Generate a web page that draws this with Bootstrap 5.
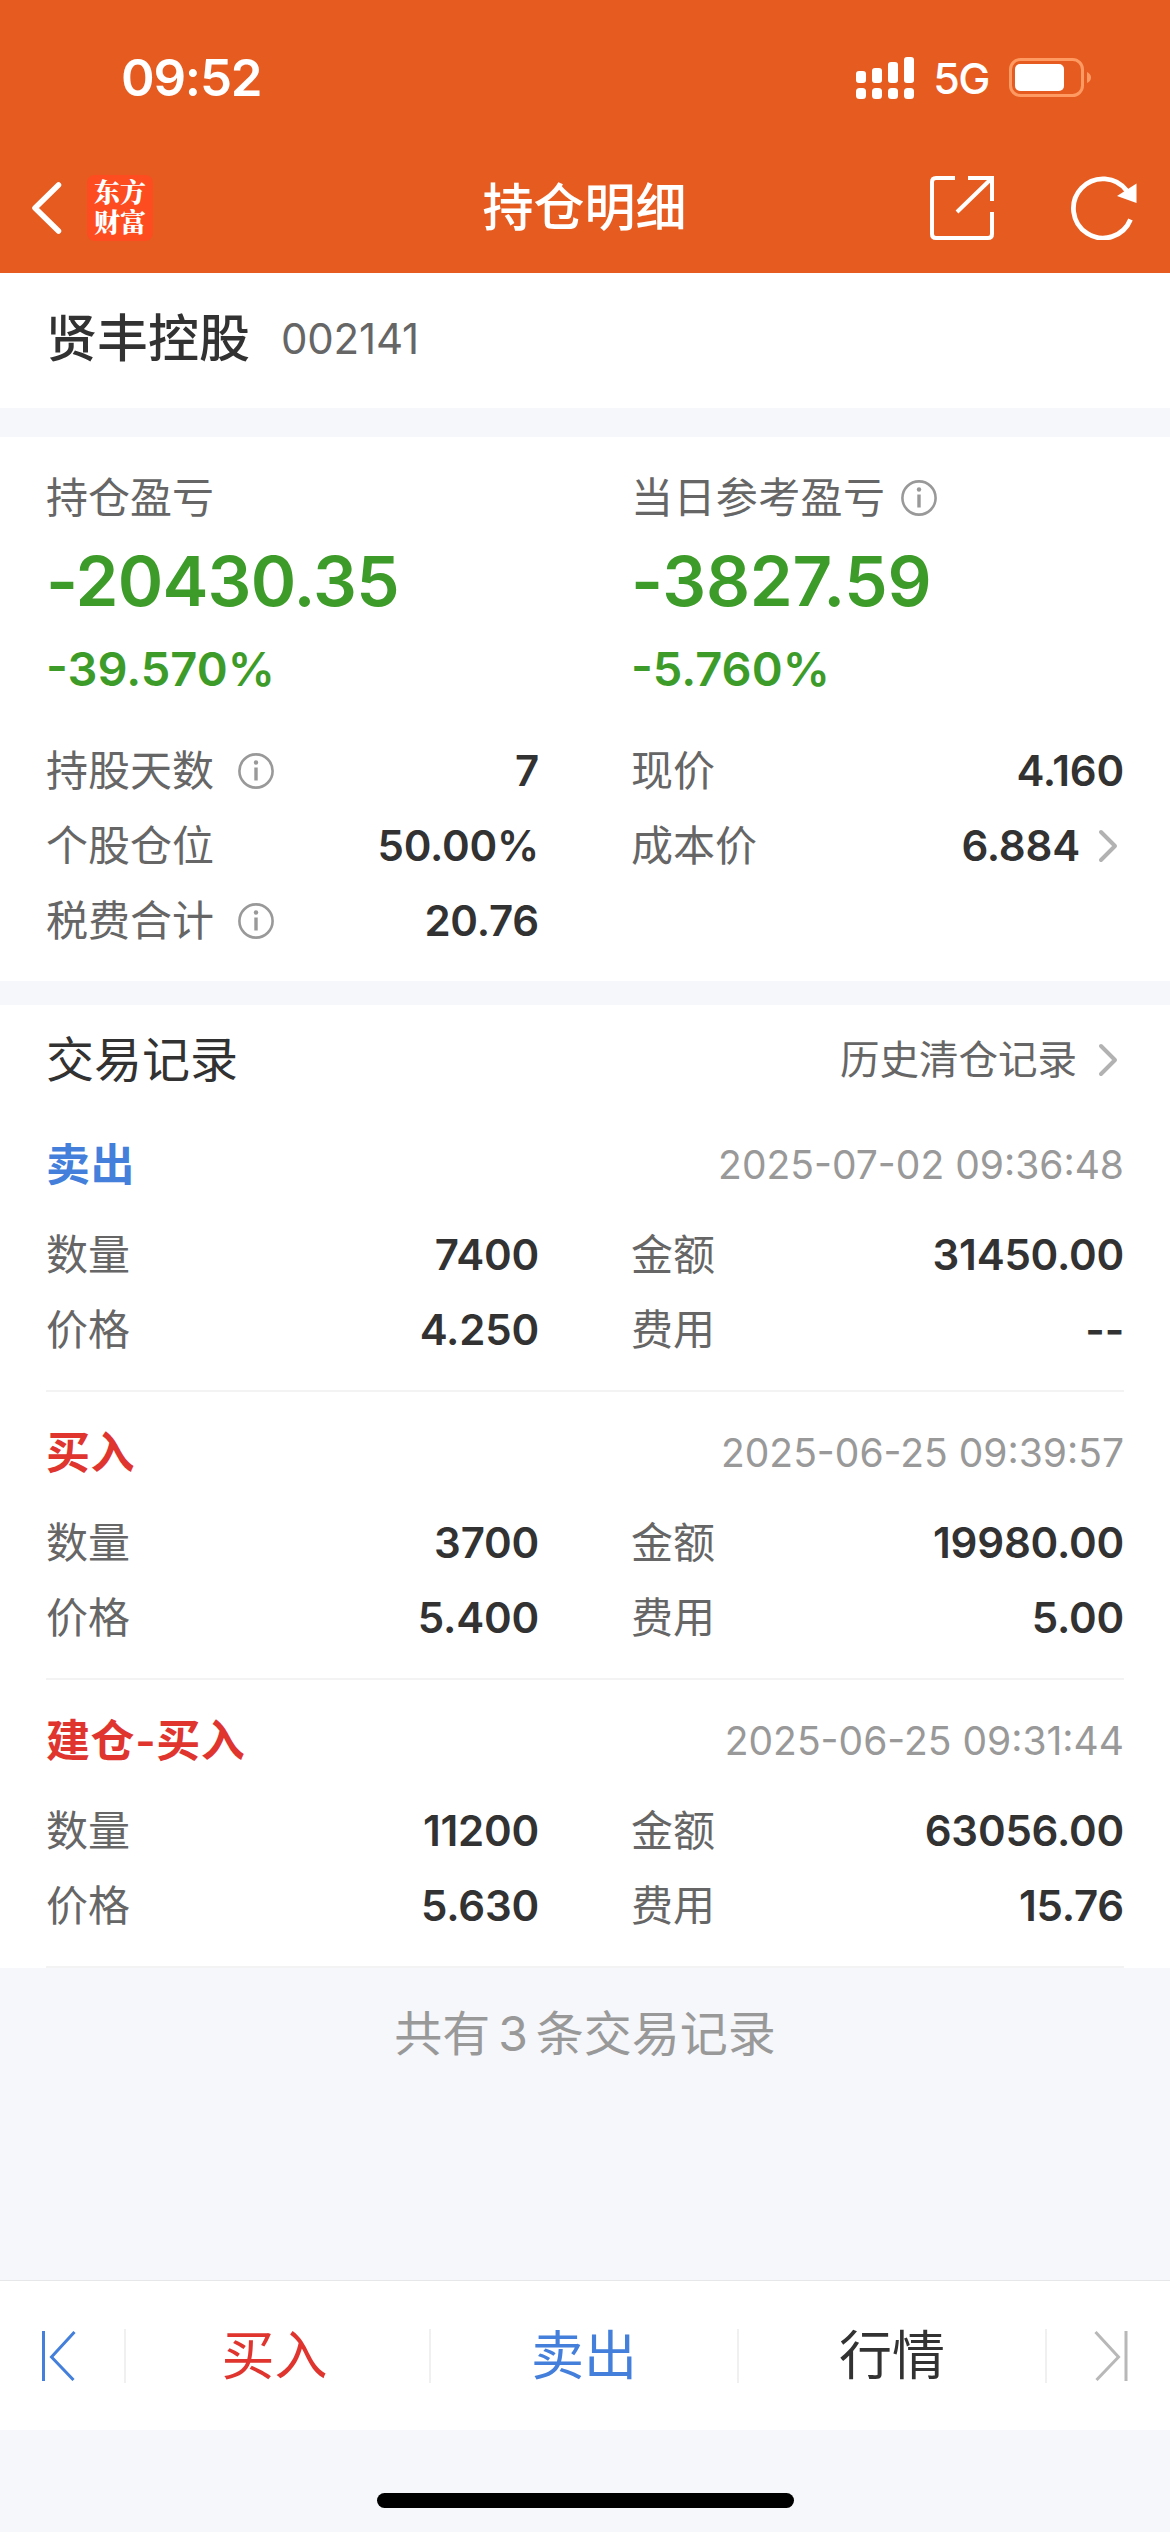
<!DOCTYPE html>
<html lang="zh-CN">
<head>
<meta charset="utf-8">
<meta name="viewport" content="width=device-width, initial-scale=1">
<title>持仓明细</title>
<link href="https://cdn.jsdelivr.net/npm/bootstrap@5.3.0/dist/css/bootstrap.min.css" rel="stylesheet">
<style>
body{font-family:Inter,"Noto Sans CJK SC",sans-serif;background:#f6f7fa;color:#323232;width:1170px;height:2532px;overflow:hidden}
svg{display:block;flex:none}
.topbar{background:#e65b1f;height:273px;color:#fff}
.status{height:145px;padding:10px 79px 0 121px}
.clock{font-size:51px;font-weight:600;line-height:60px;letter-spacing:-1.2px}
.net{font-size:43px;line-height:50px;font-weight:500;letter-spacing:-1.5px;margin:0 20px 0 19px}
.titlebar{height:128px;display:grid;grid-template-columns:1fr auto 1fr;padding:0 33px 2px 32px}
.titlebar h1{font-size:51px;font-weight:500;margin:0;line-height:60px}
.brand{width:66px;height:66px;border-radius:8px;background:#fd4c20;font-family:"Noto Serif CJK SC","Noto Sans CJK SC",sans-serif;font-size:26px;line-height:30px;font-weight:900;margin-left:25px;padding-bottom:5px}
.tools{gap:77px}
.stock{height:135px;padding:0 46px 3px;gap:31px}
.stock-name{font-size:51px;font-weight:500;line-height:60px}
.stock-code{font-size:42px;color:#666;line-height:50px;letter-spacing:-.2px}
.holding{margin-top:29px;height:544px;padding:31px 46px 0}
.records{margin-top:24px;height:963px;padding:19px 46px 0}
.pair{display:grid;grid-template-columns:493px 493px;column-gap:92px}
.lab{font-size:42px;line-height:60px;color:#666}
.lab-wide{letter-spacing:.4px}
.num{font-size:42px;font-weight:600;line-height:60px;letter-spacing:-.2px}
.kv{height:75px}
.down{color:#3d9c29;font-weight:600}
.amount{font-size:69px;line-height:90px;margin-top:8px;letter-spacing:-.8px}
.amount-day{letter-spacing:-.3px}
.rate{font-size:47px;line-height:60px;margin-top:13px;margin-bottom:34px}
.sec-title{font-size:48px;line-height:72px}
.hist{font-size:39.500px;color:#666;line-height:60px}
.hist svg{margin-left:19px}
.entry{height:288px;border-bottom:2px solid #f3f3f3}
.entry-first{margin-top:8px}
.entry-head{height:121px;padding-top:31px}
.side{font-size:44px;font-weight:600;line-height:60px;letter-spacing:.6px}
.buy{color:#e0352f}.sell{color:#437fdb}
.stamp{font-size:39px;color:#999;line-height:60px}
.total{font-size:48px;color:#999;height:312px;padding-top:30px;line-height:72px}
.actions{height:150px;border-top:1px solid #e6e7e9}
.act{font-size:53px;line-height:54px;height:54px;border-right:2px solid #f0f0f0}
.act-tab{flex:1 1 0}
.act-first{padding-right:6px;flex:0 0 305px}
.edge{width:126px;height:54px}
.edge-end{width:123px}
.home{width:417px;height:15px;margin-top:63px}
</style>
</head>
<body>
<svg width="0" height="0" class="position-absolute">
  <symbol id="info" viewBox="0 0 36 36"><circle cx="18" cy="18" r="16.600" fill="none" stroke="#999" stroke-width="2.600"/><circle cx="18" cy="9.500" r="2.200" fill="#999"/><path d="M18 14.500v13" stroke="#999" stroke-width="3.400"/></symbol>
  <symbol id="more" viewBox="0 0 20 34"><path d="M3 3l14 14L3 31" fill="none" stroke="#b2b2b2" stroke-width="4" stroke-linecap="round" stroke-linejoin="round"/></symbol>
</svg>
<header class="topbar">
  <div class="status d-flex align-items-center justify-content-between">
    <span class="clock">09:52</span>
    <div class="d-flex align-items-center">
      <svg width="58" height="42" viewBox="0 0 58 42" fill="#fff"><rect y="14" width="10" height="12" rx="3"/><rect x="16" y="11" width="10" height="15" rx="3"/><rect x="32" y="5" width="10" height="21" rx="3"/><rect x="48" width="10" height="26" rx="3"/><rect y="31" width="10" height="11" rx="3.500"/><rect x="16" y="31" width="10" height="11" rx="3.500"/><rect x="32" y="31" width="10" height="11" rx="3.500"/><rect x="48" y="31" width="10" height="11" rx="3.500"/></svg>
      <span class="net">5G</span>
      <svg width="82" height="39" viewBox="0 0 82 39"><rect x="1.500" y="1.500" width="72" height="36" rx="10" fill="none" stroke="#ff9a62" stroke-width="3"/><rect x="6" y="6" width="49" height="27" rx="5" fill="#fff"/><path d="M78 14q4 2 4 5.500t-4 5.500z" fill="#ff9a62"/></svg>
    </div>
  </div>
  <nav class="titlebar align-items-center">
    <div class="d-flex align-items-center">
      <svg width="30" height="54" viewBox="0 0 30 54" fill="none" stroke="#fff" stroke-width="5.500" stroke-linecap="round" stroke-linejoin="round"><path d="M26.500 4L3 27l23.500 23"/></svg>
      <div class="brand text-center d-flex align-items-center justify-content-center"><span>东方<br>财富</span></div>
    </div>
    <h1>持仓明细</h1>
    <div class="tools d-flex justify-content-end align-items-center">
      <svg width="64" height="64" viewBox="0 0 64 64" fill="none" stroke="#fff" stroke-width="4"><path d="M25 2H6Q2 2 2 6v52q0 4 4 4h52q4 0 4-4V36"/><path d="M38 2h24v23M61 3L27 36"/></svg>
      <svg width="66" height="64" viewBox="0 0 66 64"><path d="M59.500 43.500A29.600 29.600 0 1 1 56 15" fill="none" stroke="#fff" stroke-width="4.800"/><path d="M65.500 7.500v19.500L46 20z" fill="#fff"/></svg>
    </div>
  </nav>
</header>

<main>
  <section class="stock bg-white d-flex align-items-center">
    <span class="stock-name">贤丰控股</span><span class="stock-code">002141</span>
  </section>

  <section class="holding bg-white">
    <div class="pair">
      <div>
        <div class="lab">持仓盈亏</div>
        <div class="down amount">-20430.35</div>
        <div class="down rate">-39.570%</div>
      </div>
      <div>
        <div class="lab lab-wide d-flex align-items-center">当日参考盈亏<svg class="ms-3" width="36" height="36"><use href="#info"/></svg></div>
        <div class="down amount amount-day">-3827.59</div>
        <div class="down rate">-5.760%</div>
      </div>
    </div>
    <div class="pair">
      <div>
        <div class="kv d-flex justify-content-between align-items-center"><span class="lab d-flex align-items-center">持股天数<svg class="ms-4" width="36" height="36"><use href="#info"/></svg></span><span class="num">7</span></div>
        <div class="kv d-flex justify-content-between align-items-center"><span class="lab">个股仓位</span><span class="num">50.00%</span></div>
        <div class="kv d-flex justify-content-between align-items-center"><span class="lab d-flex align-items-center">税费合计<svg class="ms-4" width="36" height="36"><use href="#info"/></svg></span><span class="num">20.76</span></div>
      </div>
      <div>
        <div class="kv d-flex justify-content-between align-items-center"><span class="lab">现价</span><span class="num">4.160</span></div>
        <div class="kv d-flex justify-content-between align-items-center"><span class="lab">成本价</span><span class="num d-flex align-items-center">6.884<svg class="ms-3 me-1" width="24" height="34"><use href="#more"/></svg></span></div>
      </div>
    </div>
  </section>

  <section class="records bg-white">
    <div class="d-flex justify-content-between align-items-center">
      <span class="sec-title">交易记录</span>
      <span class="hist d-flex align-items-center">历史清仓记录<svg class="me-1" width="24" height="34"><use href="#more"/></svg></span>
    </div>
    <article class="entry entry-first">
      <div class="entry-head d-flex justify-content-between"><span class="side sell">卖出</span><span class="stamp">2025-07-02 09:36:48</span></div>
      <div class="pair">
        <div class="kv d-flex justify-content-between"><span class="lab">数量</span><span class="num">7400</span></div>
        <div class="kv d-flex justify-content-between"><span class="lab">金额</span><span class="num">31450.00</span></div>
        <div class="kv d-flex justify-content-between"><span class="lab">价格</span><span class="num">4.250</span></div>
        <div class="kv d-flex justify-content-between"><span class="lab">费用</span><span class="num">--</span></div>
      </div>
    </article>
    <article class="entry">
      <div class="entry-head d-flex justify-content-between"><span class="side buy">买入</span><span class="stamp">2025-06-25 09:39:57</span></div>
      <div class="pair">
        <div class="kv d-flex justify-content-between"><span class="lab">数量</span><span class="num">3700</span></div>
        <div class="kv d-flex justify-content-between"><span class="lab">金额</span><span class="num">19980.00</span></div>
        <div class="kv d-flex justify-content-between"><span class="lab">价格</span><span class="num">5.400</span></div>
        <div class="kv d-flex justify-content-between"><span class="lab">费用</span><span class="num">5.00</span></div>
      </div>
    </article>
    <article class="entry">
      <div class="entry-head d-flex justify-content-between"><span class="side buy">建仓-买入</span><span class="stamp">2025-06-25 09:31:44</span></div>
      <div class="pair">
        <div class="kv d-flex justify-content-between"><span class="lab">数量</span><span class="num">11200</span></div>
        <div class="kv d-flex justify-content-between"><span class="lab">金额</span><span class="num">63056.00</span></div>
        <div class="kv d-flex justify-content-between"><span class="lab">价格</span><span class="num">5.630</span></div>
        <div class="kv d-flex justify-content-between"><span class="lab">费用</span><span class="num">15.76</span></div>
      </div>
    </article>
  </section>
  <div class="total text-center">共有<span class="mx-2">3</span>条交易记录</div>
</main>

<footer>
  <div class="actions bg-white d-flex align-items-center">
    <div class="edge act d-flex align-items-center"><svg width="80" height="50" viewBox="0 0 80 50" fill="none" stroke="#437fdb" stroke-width="3"><path d="M43.500 0v50M74.500 1L51.500 26l22 23"/></svg></div>
    <div class="act act-first buy text-center">买入</div>
    <div class="act act-tab sell text-center">卖出</div>
    <div class="act act-tab text-center">行情</div>
    <div class="edge edge-end d-flex align-items-center justify-content-end"><svg width="80" height="50" viewBox="0 0 80 50" fill="none" stroke="#b8b8b8" stroke-width="3"><path d="M36 0v50M5.500 1L28.500 26l-22 23"/></svg></div>
  </div>
  <div class="home bg-black rounded-pill mx-auto"></div>
</footer>
<script src="https://cdn.jsdelivr.net/npm/bootstrap@5.3.0/dist/js/bootstrap.bundle.min.js"></script>
</body>
</html>
